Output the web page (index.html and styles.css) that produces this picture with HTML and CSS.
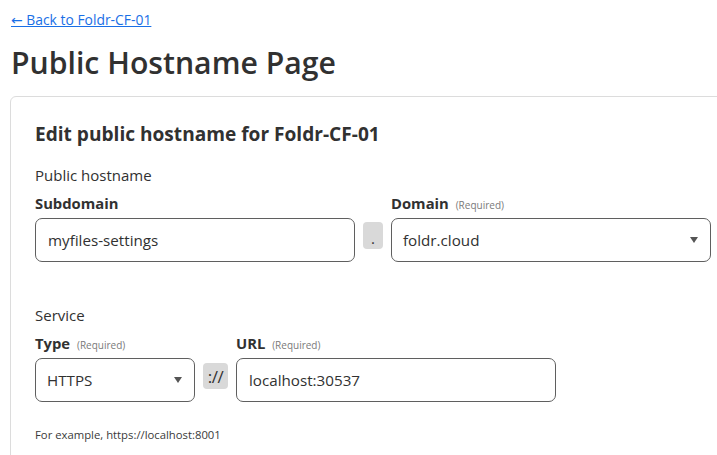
FILE: index.html
```html
<!DOCTYPE html>
<html lang="en">
<head>
<meta charset="utf-8">
<title>Public Hostname Page</title>
<link rel="stylesheet" href="styles.css">
</head>
<body>
<div class="page">
  <a class="back" href="#">← Back to Foldr-CF-01</a>
  <h1 class="title">Public Hostname Page</h1>
  <section class="card">
    <h2 class="card-title">Edit public hostname for Foldr-CF-01</h2>

    <div class="group">
      <div class="group-label">Public hostname</div>
      <div class="row">
        <div class="field w320">
          <label class="label">Subdomain</label>
          <div class="control"><span class="value">myfiles-settings</span></div>
        </div>
        <div class="sep sep-dot">.</div>
        <div class="field w320">
          <label class="label">Domain <span class="req">(Required)</span></label>
          <div class="control select"><span class="value">foldr.cloud</span><span class="caret"></span></div>
        </div>
      </div>
    </div>

    <div class="group group-service">
      <div class="group-label">Service</div>
      <div class="row">
        <div class="field w160">
          <label class="label">Type <span class="req">(Required)</span></label>
          <div class="control select"><span class="value">HTTPS</span><span class="caret"></span></div>
        </div>
        <div class="sep sep-proto">://</div>
        <div class="field w320">
          <label class="label">URL <span class="req">(Required)</span></label>
          <div class="control"><span class="value">localhost:30537</span></div>
        </div>
      </div>
      <div class="hint">For example, https://localhost:8001</div>
    </div>
  </section>
</div>
</body>
</html>
```

FILE: styles.css
```css
html, body {
  margin: 0;
  padding: 0;
  overflow: hidden;
  background: #ffffff;
}

body {
  font-family: "Open Sans", "Noto Sans", "DejaVu Sans", sans-serif;
  color: #313131;
}

.page {
  padding: 11px 0 0 10px;
  width: 760px;
}

.back {
  display: block;
  width: max-content;
  margin-left: 1px;
  font-size: 13.9px;
  line-height: 18px;
  color: #1a6fe6;
  text-decoration: underline;
}

.title {
  margin: 14px 0 0 1px;
  font-size: 30.2px;
  line-height: 40px;
  font-weight: 600;
  color: #313131;
}

.card {
  margin-top: 13px;
  border: 1px solid #dcdcdc;
  border-radius: 6px;
  padding: 23px 24px 40px;
  width: 700px;
}

.card-title {
  margin: 0;
  font-size: 19.1px;
  line-height: 28px;
  font-weight: 700;
}

.group {
  margin-top: 17px;
}

.group-service {
  margin-top: 43px;
}

.group-label {
  font-size: 15px;
  line-height: 20px;
}

.row {
  display: flex;
  align-items: flex-start;
  gap: 8px;
  margin-top: 8px;
}

.field {
  display: flex;
  flex-direction: column;
}

.w320 { width: 320px; }
.w160 { width: 160px; }

.label {
  font-size: 14.8px;
  line-height: 20px;
  font-weight: 700;
  margin-bottom: 5px;
}

.req {
  font-size: 10px;
  line-height: 10px;
  font-weight: 400;
  color: #7a7a7a;
  margin-left: 3px;
}

.control {
  box-sizing: border-box;
  height: 44px;
  border: 1px solid #5f5f5f;
  border-radius: 7px;
  display: flex;
  align-items: center;
  padding: 0 12px;
  font-size: 15.2px;
}

.select {
  justify-content: space-between;
  padding-left: 11px;
  padding-right: 12px;
}

.caret {
  width: 0;
  height: 0;
  border-left: 4.5px solid transparent;
  border-right: 4.5px solid transparent;
  border-top: 6px solid #555555;
}

.sep {
  box-sizing: border-box;
  background: #d9d9d9;
  border-radius: 4px;
  display: flex;
  justify-content: center;
  font-size: 15px;
}

.sep-dot {
  width: 20px;
  height: 27px;
  margin-top: 29px;
  align-items: flex-end;
  padding-bottom: 2px;
  line-height: 18px;
}

.sep-proto {
  width: 25px;
  height: 26px;
  margin-top: 30px;
  align-items: center;
  font-size: 17px;
  letter-spacing: -0.5px;
}

.hint {
  margin-top: 25px;
  font-size: 11.3px;
  line-height: 16px;
  color: #3a3a3a;
}
```
